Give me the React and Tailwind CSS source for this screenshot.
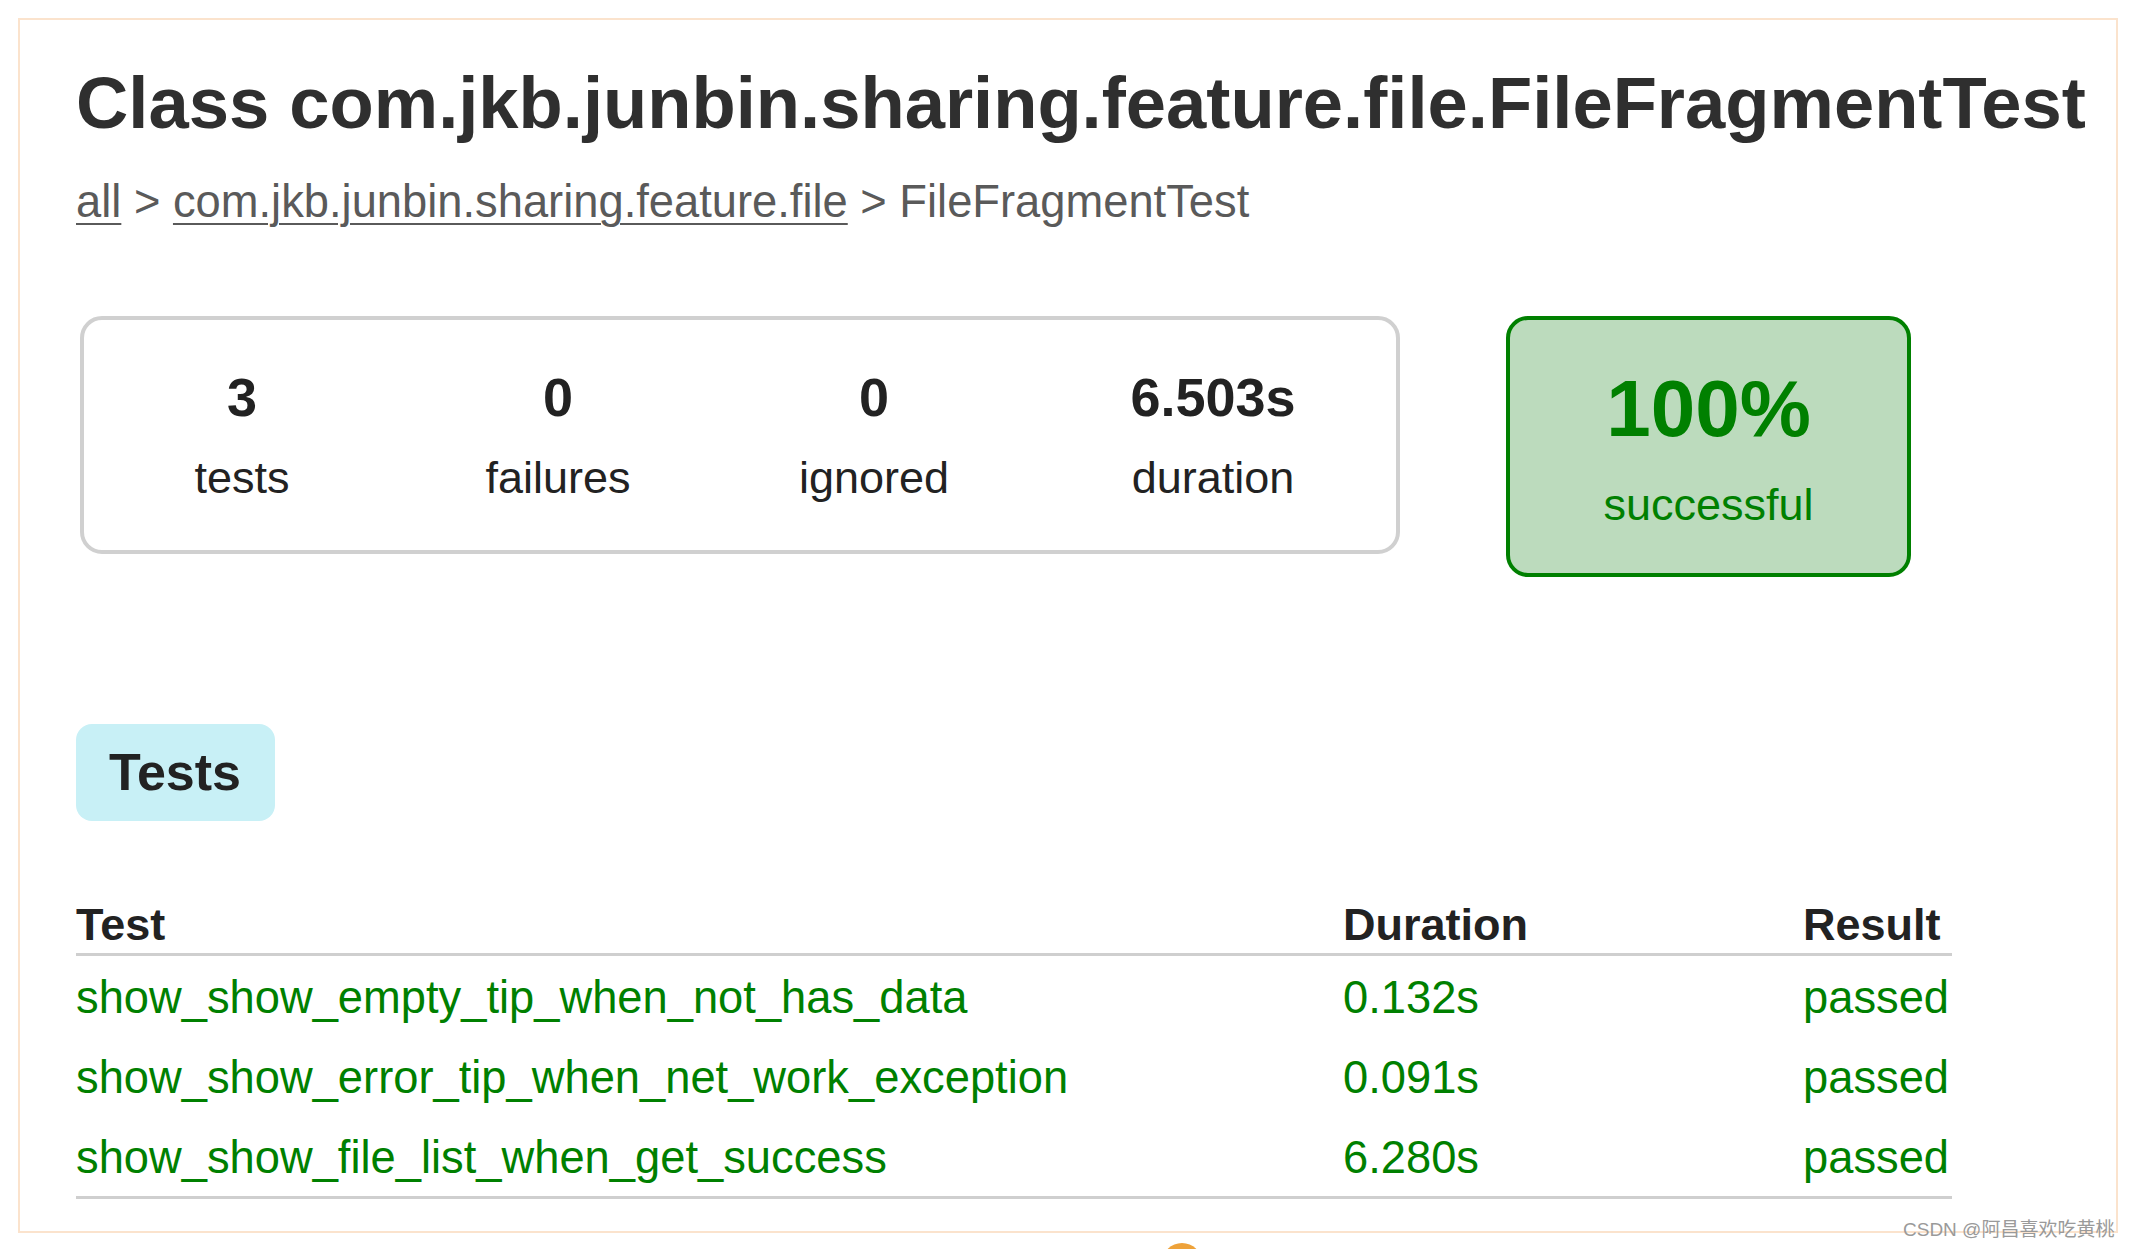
import React from "react";

const tests = [
  { name: "show_show_empty_tip_when_not_has_data", duration: "0.132s", result: "passed" },
  { name: "show_show_error_tip_when_net_work_exception", duration: "0.091s", result: "passed" },
  { name: "show_show_file_list_when_get_success", duration: "6.280s", result: "passed" },
];

const counters = [
  { value: "3", label: "tests", width: "w-[316px]" },
  { value: "0", label: "failures", width: "w-[316px]" },
  { value: "0", label: "ignored", width: "w-[316px]" },
  { value: "6.503s", label: "duration", width: "w-[362px]" },
];

const App = () => {
  return (
    <div
      className="relative w-[2131px] h-[1249px] overflow-hidden bg-white pt-[18px] pl-[18px]"
      style={{ fontFamily: '"Liberation Sans", Arial, sans-serif' }}
    >
      {/* report frame */}
      <div className="w-[2100px] h-[1215px] border-2 border-[#fbe3cd] pl-[56px] pt-[47px]">
        <h1 className="text-[72.4px] leading-none font-bold text-[#2f2f2f] whitespace-nowrap">
          Class com.jkb.junbin.sharing.feature.file.FileFragmentTest
        </h1>

        <div className="mt-[40px] text-[45.3px] leading-none text-[#5a5a5a] whitespace-nowrap">
          <a className="underline underline-offset-[6px] decoration-2">all</a>
          <span> &gt; </span>
          <a className="underline underline-offset-[6px] decoration-2">com.jkb.junbin.sharing.feature.file</a>
          <span> &gt; FileFragmentTest</span>
        </div>

        {/* summary */}
        <div className="mt-[91px] ml-[4px] flex items-start gap-[106px]">
          <div className="flex w-[1320px] h-[238px] border-4 border-[#d0d0d0] rounded-[22px] pt-[50px]">
            {counters.map((c) => (
              <div key={c.label} className={`${c.width} flex flex-col items-center text-[#222]`}>
                <div className="text-[54px] leading-none font-bold">{c.value}</div>
                <div className="mt-[31px] text-[45px] leading-none">{c.label}</div>
              </div>
            ))}
          </div>

          <div className="w-[405px] h-[261px] border-4 border-[#008000] rounded-[22px] bg-[#bcdbbd] flex flex-col items-center pt-[49px] text-[#008000]">
            <div className="text-[80px] leading-none font-bold">100%</div>
            <div className="mt-[33px] text-[45px] leading-none">successful</div>
          </div>
        </div>

        {/* tab */}
        <div className="mt-[147px] w-[199px] h-[97px] rounded-[16px] bg-[#c8f0f6] flex items-center pl-[33px]">
          <span className="text-[52px] leading-none font-bold text-[#222]">Tests</span>
        </div>

        {/* table */}
        <div className="mt-[75px] w-[1876px]">
          <div className="flex items-center h-[60px] border-b-[3px] border-[#cfcfcf] text-[45px] leading-none font-bold text-[#222]">
            <div className="w-[1267px]">Test</div>
            <div className="w-[460px]">Duration</div>
            <div className="flex-1">Result</div>
          </div>
          <div className="border-b-[3px] border-[#cfcfcf]">
            {tests.map((t) => (
              <div key={t.name} className="flex items-center h-[80px] pt-[3px] text-[45.3px] leading-none text-[#008000]">
                <div className="w-[1267px] whitespace-nowrap">{t.name}</div>
                <div className="w-[460px]">{t.duration}</div>
                <div className="flex-1">{t.result}</div>
              </div>
            ))}
          </div>
        </div>
      </div>

      {/* watermark */}
      <div
        className="absolute left-[1903px] top-[1220px] text-[19px] leading-none text-[#9a9a9a] whitespace-nowrap"
        style={{ fontFamily: '"Liberation Sans", "Noto Sans CJK SC", sans-serif' }}
      >
        CSDN @阿昌喜欢吃黄桃
      </div>
      <div className="absolute left-[1162px] top-[1243px] w-[40px] h-[40px] rounded-full bg-[#eea23a]" />
    </div>
  );
};

export default App;
